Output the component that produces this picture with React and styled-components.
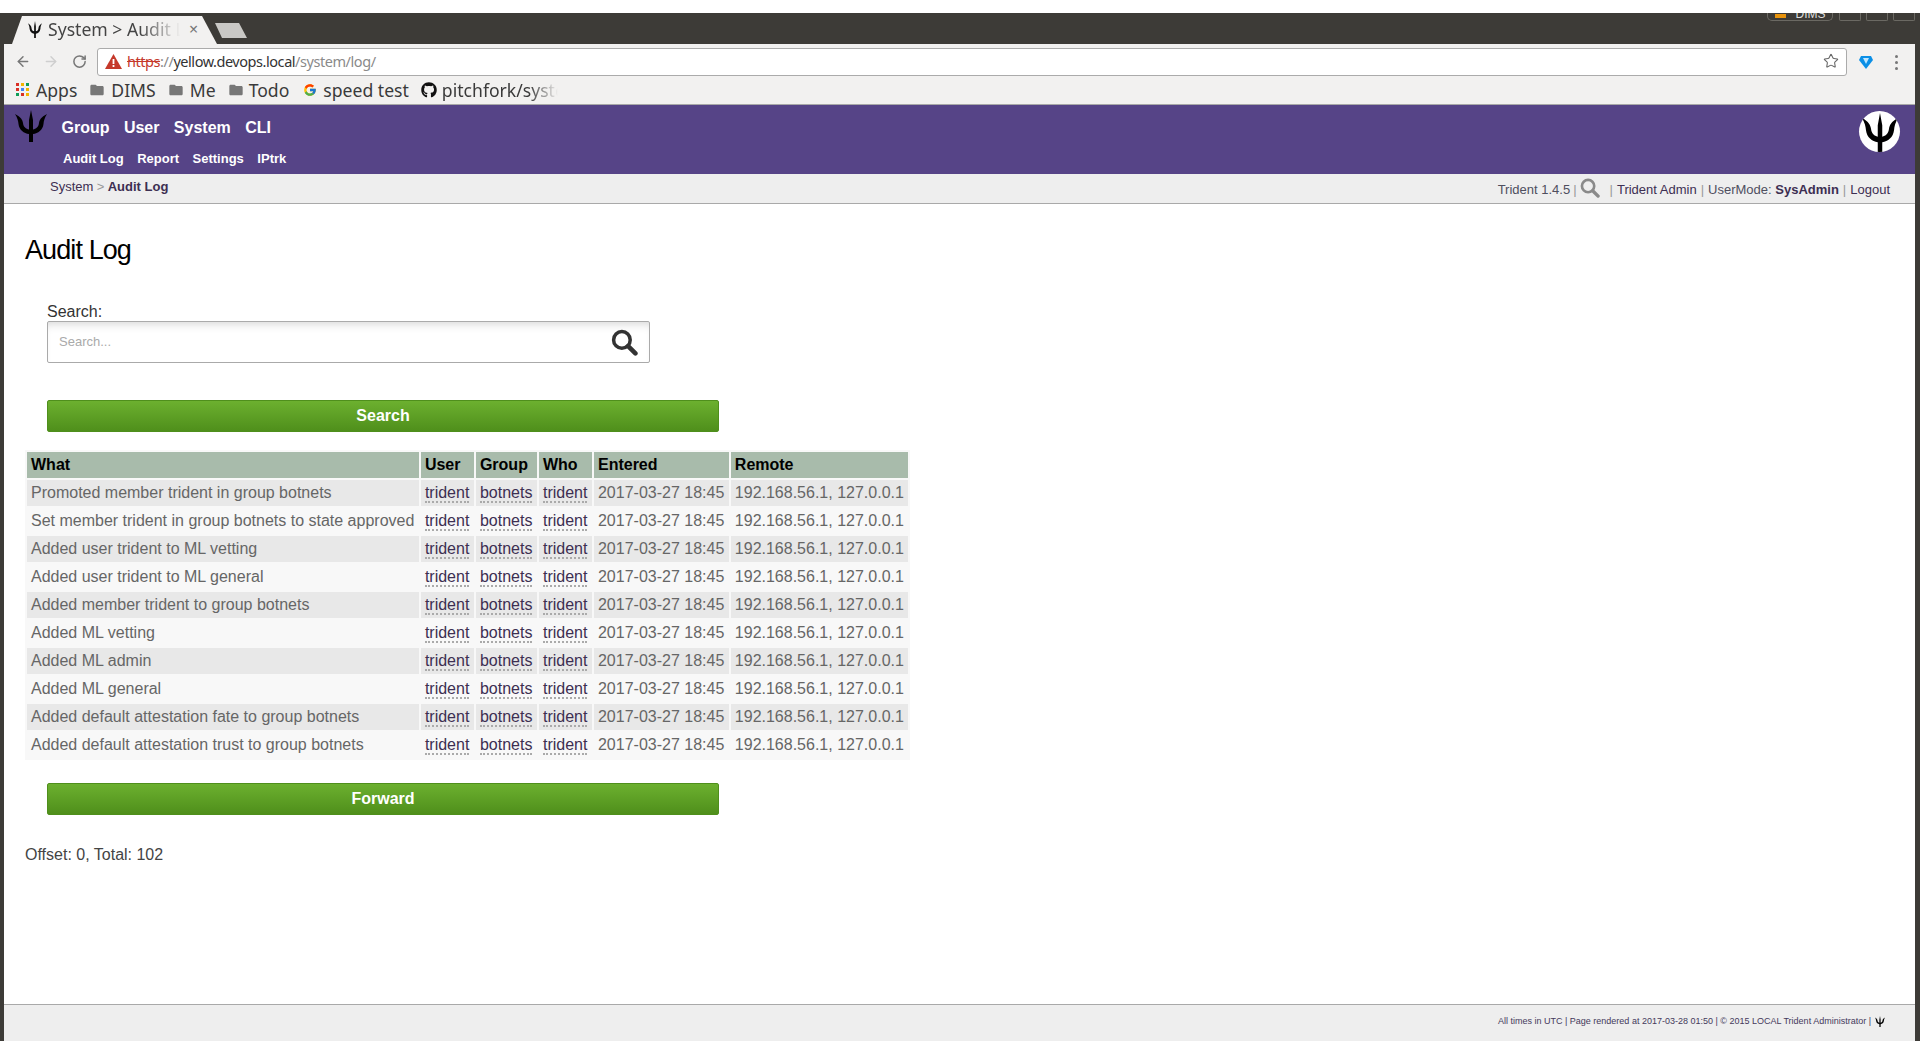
import React from 'react';
import styled, { createGlobalStyle } from 'styled-components';
import { ArrowLeft, ArrowRight, RotateCw, Star } from 'lucide-react';
import { MdFolder } from 'react-icons/md';
import { FcGoogle } from 'react-icons/fc';
import { FaGithub } from 'react-icons/fa';

const GlobalStyle = createGlobalStyle`
  html, body {
    margin: 0;
    padding: 0;
    background: #fff;
  }
  body {
    font-family: "Liberation Sans", Arial, sans-serif;
    font-size: 16px;
    color: #555;
  }
`;

const Screen = styled.div`
  width: 1920px;
  height: 1056px;
  padding: 13px 0 15px;
  box-sizing: border-box;
  overflow: hidden;
`;

const Frame = styled.div`
  height: 100%;
  display: flex;
  flex-direction: column;
  box-sizing: border-box;
  border-left: 4px solid #3d3b37;
  border-right: 5px solid #3d3b37;
`;

const TabStrip = styled.div`
  height: 31px;
  flex: none;
  background: #3d3b37;
  display: flex;
  align-items: flex-end;
  padding-left: 8px;
  margin-right: -5px;
`;

const Tab = styled.div`
  width: 205px;
  height: 28px;
  background: #f2f1f0;
  clip-path: polygon(0 100%, 10px 0, 190px 0, 205px 100%);
  display: flex;
  align-items: center;
  padding: 0 0 2px 16px;
  box-sizing: border-box;
  font-family: "Noto Sans", sans-serif;
`;

const TabTitle = styled.span`
  width: 135px;
  margin-left: 6px;
  font-size: 17.6px;
  color: #444;
  white-space: nowrap;
  overflow: hidden;
  -webkit-mask-image: linear-gradient(to right, #000 68%, transparent 98%);
  mask-image: linear-gradient(to right, #000 68%, transparent 98%);
`;

const TabClose = styled.span`
  margin-left: 6px;
  font-size: 16px;
  color: #777;
`;

const NewTab = styled.div`
  width: 32px;
  height: 15px;
  margin: 0 0 6px -2px;
  background: #c9c8c5;
  clip-path: polygon(0 0, 24px 0, 32px 100%, 7px 100%);
`;

const WinControls = styled.div`
  margin-left: auto;
  align-self: flex-start;
  display: flex;
  gap: 5px;
  padding-right: 5px;
`;

const WinBadge = styled.div`
  width: 66px;
  height: 8px;
  margin-right: 1px;
  box-sizing: border-box;
  border: 1px solid #6b6963;
  border-top: 0;
  border-radius: 0 0 5px 5px;
  overflow: hidden;
  display: flex;
  justify-content: center;
  gap: 10px;
  color: #ddd;
  font-size: 12px;
  line-height: 8px;
  span {
    margin-top: -3px;
  }
  i {
    width: 11px;
    height: 4px;
    margin-top: 1px;
    background: #e8930c;
  }
`;

const WinButton = styled.div`
  width: 22px;
  height: 8px;
  box-sizing: border-box;
  border: 1px solid #6b6963;
  border-top: 0;
  border-radius: 0 0 2px 2px;
`;

const Toolbar = styled.div`
  height: 33px;
  flex: none;
  background: #f2f1f0;
  display: flex;
  align-items: flex-start;
  padding: 4px 0 0 11px;
  box-sizing: border-box;
`;

const NavIcon = styled.span`
  width: 16px;
  height: 26px;
  margin-right: 12px;
  display: flex;
  align-items: center;
  justify-content: center;
  color: ${p => (p.$dim ? '#cfcfcf' : '#777')};
`;

const Omnibox = styled.div`
  width: 1750px;
  height: 28px;
  margin-left: -2px;
  box-sizing: border-box;
  background: #fff;
  border: 1px solid #ababab;
  border-radius: 3px;
  display: flex;
  align-items: center;
  padding: 0 7px 2px;
  font-family: "Noto Sans", sans-serif;
  font-size: 14.5px;
  letter-spacing: -0.45px;
`;

const Https = styled.span`
  color: #c5392b;
  margin-left: 5px;
  text-decoration: line-through;
`;

const UrlMuted = styled.span`
  color: #8a8a8a;
`;

const UrlHost = styled.span`
  color: #333;
`;

const StarSlot = styled.span`
  margin-left: auto;
  display: flex;
  color: #666;
`;

const ExtIcon = styled.span`
  margin-left: 12px;
  height: 28px;
  display: flex;
  align-items: center;
`;

const MenuDots = styled.span`
  margin-left: 22px;
  height: 28px;
  display: flex;
  flex-direction: column;
  align-items: center;
  justify-content: center;
  gap: 3px;
  i {
    width: 3px;
    height: 3px;
    border-radius: 50%;
    background: #777;
  }
`;

const Bookmarks = styled.div`
  height: 28px;
  flex: none;
  box-sizing: border-box;
  background: #f2f1f0;
  border-bottom: 1px solid #a8a8a8;
  display: flex;
  align-items: center;
  padding: 0 0 2px 12px;
  font-family: "Noto Sans", sans-serif;
  font-size: 17.6px;
  color: #3a3a3a;
`;

const AppsGrid = styled.span`
  width: 13px;
  height: 13px;
  display: grid;
  grid-template-columns: repeat(3, 3px);
  grid-auto-rows: 3px;
  gap: 2px;
  margin-right: 7px;
`;

const AppsDot = styled.i`
  background: ${p => p.$c};
`;

const Bookmark = styled.span`
  display: flex;
  align-items: center;
  gap: ${p => p.$gap || 6}px;
  margin-right: ${p => p.$right}px;
  white-space: nowrap;
`;

const FadedLabel = styled.span`
  width: 116px;
  overflow: hidden;
  -webkit-mask-image: linear-gradient(to right, #000 75%, transparent 100%);
  mask-image: linear-gradient(to right, #000 75%, transparent 100%);
`;

const Header = styled.header`
  height: 69px;
  flex: none;
  background: #564487;
  display: flex;
  position: relative;
  padding: 5px 0 0 11px;
  box-sizing: border-box;
`;

const LogoSlot = styled.span`
  width: 35px;
  height: 32px;
  flex: none;
  display: flex;
`;

const NavStack = styled.nav`
  margin-left: 11px;
  display: flex;
  flex-direction: column;
`;

const MainNav = styled.div`
  display: flex;
  gap: 14.4px;
  margin: 9px 0 0 0.5px;
  font-size: 16px;
  line-height: 18px;
  font-weight: bold;
  color: #fff;
`;

const SubNav = styled.div`
  display: flex;
  gap: 13.5px;
  margin: 14px 0 0 2px;
  font-size: 13px;
  line-height: 16px;
  font-weight: bold;
  color: #fff;
`;

const HeaderBadge = styled.span`
  margin: 1px 15px 0 auto;
  width: 41px;
  height: 41px;
  border-radius: 50%;
  background: #fff;
  display: flex;
  align-items: flex-end;
  justify-content: center;
  overflow: hidden;
`;

const Crumbs = styled.div`
  height: 30px;
  flex: none;
  box-sizing: border-box;
  background: #eee;
  border-bottom: 1px solid #a9a9a9;
  display: flex;
  justify-content: space-between;
  padding: 5px 25px 0 46px;
  font-size: 13px;
  line-height: 16px;
  color: #3d2f52;
`;

const CrumbSep = styled.span`
  color: #999;
  margin: 0 3.4px;
`;

const UserBar = styled.div`
  display: flex;
  align-items: flex-start;
  margin-top: 3px;
  color: #4f4f5f;
  a {
    color: #3d2f52;
  }
  b {
    color: #3d2f52;
  }
`;

const BarSep = styled.span`
  color: #999;
  margin: 0 ${p => p.$m || 4}px;
`;

const BarSearch = styled.span`
  display: flex;
  margin: -4px 6px 0 0;
`;

const Content = styled.main`
  flex: 1;
  background: #fff;
  padding: 31px 0 0 21px;
`;

const Title = styled.h1`
  margin: 0 0 38px;
  font-size: 27px;
  line-height: 30px;
  font-weight: normal;
  letter-spacing: -0.9px;
  color: #000;
`;

const SearchForm = styled.div`
  margin-left: 22px;
  width: 672px;
`;

const FieldLabel = styled.label`
  display: block;
  line-height: 18px;
  color: #333;
`;

const InputBox = styled.div`
  width: 603px;
  height: 42px;
  box-sizing: border-box;
  border: 1px solid #aaa;
  border-radius: 2px;
  box-shadow: inset 0 8px 10px -6px #d5d5d5;
  display: flex;
  align-items: center;
  padding: 0 11px;
  background: #fff;
  margin-bottom: 37px;
`;

const SearchInput = styled.input`
  flex: 1;
  border: 0;
  outline: 0;
  background: transparent;
  padding: 0 0 2px;
  font-family: "Liberation Sans", Arial, sans-serif;
  font-size: 13px;
  &::placeholder {
    color: #aaa;
    opacity: 1;
  }
`;

const GreenButton = styled.button`
  display: block;
  width: 672px;
  height: 32px;
  padding: 0;
  box-sizing: border-box;
  border: 1px solid #4f8f1c;
  border-radius: 2px;
  background: linear-gradient(to bottom, #6cb02f, #4f8f1b);
  color: #fff;
  font-family: "Liberation Sans", Arial, sans-serif;
  font-size: 16px;
  font-weight: bold;
`;

const LogTable = styled.table`
  margin-top: 18px;
  border-collapse: separate;
  border-spacing: 2px;
  background: #f8f8f8;
  font-size: 16px;
`;

const HeadCell = styled.th`
  height: 26px;
  padding: 0 4.55px 0 4px;
  text-align: left;
  background: #a8bbab;
  color: #000;
`;

const Row = styled.tr`
  background: ${p => (p.$alt ? '#f8f8f8' : '#e8e8e8')};
`;

const Cell = styled.td`
  height: 26px;
  padding: 0 4.55px 0 4px;
  white-space: nowrap;
  color: #666;
`;

const DottedLink = styled.a`
  color: #3d2f52;
  border-bottom: 2px dotted #aaa;
`;

const Pager = styled.div`
  margin: 23px 0 0 22px;
`;

const Totals = styled.div`
  margin-top: 31px;
  line-height: 18px;
  color: #444;
`;

const Footer = styled.footer`
  height: 37px;
  flex: none;
  box-sizing: border-box;
  background: #eee;
  border-top: 1px solid #a9a9a9;
  display: flex;
  justify-content: flex-end;
  align-items: center;
  gap: 4px;
  padding: 0 30px 4px 0;
  font-size: 9px;
  color: #453a5c;
`;

const Trident = ({ size = 32, height, color = '#000' }) => (
  <svg width={size} height={height || size} viewBox="0 0 32 32" preserveAspectRatio="none">
    <path
      fill={color}
      d="M16 0 L18 10 L18 19.5 C21 19 23.5 17 24 13 C24.4 10 26 7 32 4 C29.5 8 28.7 11 28.5 14 C27.8 20 23 23.5 18 24 L18 32 L14 32 L14 24 C9 23.5 4.2 20 3.5 14 C3.3 11 2.5 8 0 4 C6 7 7.6 10 8 13 C8.5 17 11 19 14 19.5 L14 10 Z"
    />
  </svg>
);

const Magnifier = ({ size, color }) => (
  <svg width={size} height={size} viewBox="0 0 26 26">
    <circle cx="10.5" cy="10.5" r="8" fill="none" stroke={color} strokeWidth="3.4" />
    <path d="M16.5 16.5 L23.5 23.5" stroke={color} strokeWidth="4.4" strokeLinecap="round" />
  </svg>
);

const WarnTriangle = () => (
  <svg width="17" height="15" viewBox="0 0 17 15">
    <path d="M8.5 0 L17 15 L0 15 Z" fill="#c5392b" />
    <rect x="7.6" y="5" width="1.8" height="5" fill="#fff" />
    <rect x="7.6" y="11" width="1.8" height="2" fill="#fff" />
  </svg>
);

const ExtDiamond = () => (
  <svg width="14" height="14" viewBox="0 0 14 14">
    <path d="M2 1 L12 1 L14 5 L7 14 L0 5 Z" fill="#0b8fe6" />
    <path d="M4 3 L10 3 L7 9 Z" fill="#bfe6ff" />
  </svg>
);

const appsColors = ['#d93025', '#f4b400', '#0f9d58', '#d93025', '#4285f4', '#f4b400', '#0f9d58', '#d93025', '#f4b400'];

const logRows = [
  'Promoted member trident in group botnets',
  'Set member trident in group botnets to state approved',
  'Added user trident to ML vetting',
  'Added user trident to ML general',
  'Added member trident to group botnets',
  'Added ML vetting',
  'Added ML admin',
  'Added ML general',
  'Added default attestation fate to group botnets',
  'Added default attestation trust to group botnets',
];

const App = () => {
  return (
    <Screen>
      <GlobalStyle />
      <Frame>
        <TabStrip>
          <Tab>
            <Trident size={14} height={17} color="#111" />
            <TabTitle>System &gt; Audit Log</TabTitle>
            <TabClose>×</TabClose>
          </Tab>
          <NewTab />
          <WinControls>
            <WinBadge><i /><span>DIMS</span></WinBadge>
            <WinButton />
            <WinButton />
            <WinButton />
          </WinControls>
        </TabStrip>

        <Toolbar>
          <NavIcon><ArrowLeft size={17} strokeWidth={2.2} /></NavIcon>
          <NavIcon $dim><ArrowRight size={17} strokeWidth={2.2} /></NavIcon>
          <NavIcon><RotateCw size={15} strokeWidth={2.4} /></NavIcon>
          <Omnibox>
            <WarnTriangle />
            <Https>https</Https>
            <UrlMuted>://</UrlMuted>
            <UrlHost>yellow.devops.local</UrlHost>
            <UrlMuted>/system/log/</UrlMuted>
            <StarSlot><Star size={16} strokeWidth={1.6} /></StarSlot>
          </Omnibox>
          <ExtIcon><ExtDiamond /></ExtIcon>
          <MenuDots><i /><i /><i /></MenuDots>
        </Toolbar>

        <Bookmarks>
          <AppsGrid>
            {appsColors.map((c, i) => <AppsDot key={i} $c={c} />)}
          </AppsGrid>
          <Bookmark $right={12}>Apps</Bookmark>
          <Bookmark $right={12} $gap={6}><MdFolder size={16} color="#777" />DIMS</Bookmark>
          <Bookmark $right={12} $gap={6}><MdFolder size={16} color="#777" />Me</Bookmark>
          <Bookmark $right={14} $gap={5}><MdFolder size={16} color="#777" />Todo</Bookmark>
          <Bookmark $right={12}><FcGoogle size={14} />speed test</Bookmark>
          <Bookmark $right={0} $gap={5}><FaGithub size={16} color="#111" /><FadedLabel>pitchfork/system</FadedLabel></Bookmark>
        </Bookmarks>

        <Header>
          <LogoSlot><Trident size={32} height={32} /></LogoSlot>
          <NavStack>
            <MainNav>
              <span>Group</span>
              <span>User</span>
              <span>System</span>
              <span>CLI</span>
            </MainNav>
            <SubNav>
              <span>Audit Log</span>
              <span>Report</span>
              <span>Settings</span>
              <span>IPtrk</span>
            </SubNav>
          </NavStack>
          <HeaderBadge><Trident size={36} height={39} /></HeaderBadge>
        </Header>

        <Crumbs>
          <div>System<CrumbSep>&gt;</CrumbSep><b>Audit Log</b></div>
          <UserBar>
            <span>Trident 1.4.5</span>
            <BarSep $m={3}>|</BarSep>
            <BarSearch><Magnifier size={20} color="#8a8a8a" /></BarSearch>
            <BarSep>|</BarSep>
            <a>Trident Admin</a>
            <BarSep>|</BarSep>
            <span>UserMode:&nbsp;</span><b>SysAdmin</b>
            <BarSep>|</BarSep>
            <a>Logout</a>
          </UserBar>
        </Crumbs>

        <Content>
          <Title>Audit Log</Title>
          <SearchForm>
            <FieldLabel>Search:</FieldLabel>
            <InputBox>
              <SearchInput placeholder="Search..." />
              <Magnifier size={27} color="#333" />
            </InputBox>
            <GreenButton>Search</GreenButton>
          </SearchForm>

          <LogTable>
            <thead>
              <tr>
                <HeadCell>What</HeadCell>
                <HeadCell>User</HeadCell>
                <HeadCell>Group</HeadCell>
                <HeadCell>Who</HeadCell>
                <HeadCell>Entered</HeadCell>
                <HeadCell>Remote</HeadCell>
              </tr>
            </thead>
            <tbody>
              {logRows.map((what, i) => (
                <Row key={what} $alt={i % 2 === 1}>
                  <Cell>{what}</Cell>
                  <Cell><DottedLink>trident</DottedLink></Cell>
                  <Cell><DottedLink>botnets</DottedLink></Cell>
                  <Cell><DottedLink>trident</DottedLink></Cell>
                  <Cell>2017-03-27 18:45</Cell>
                  <Cell>192.168.56.1, 127.0.0.1</Cell>
                </Row>
              ))}
            </tbody>
          </LogTable>

          <Pager>
            <GreenButton>Forward</GreenButton>
          </Pager>
          <Totals>Offset: 0, Total: 102</Totals>
        </Content>

        <Footer>
          <span>All times in UTC | Page rendered at 2017-03-28 01:50 | © 2015 LOCAL Trident Administrator |</span>
          <Trident size={10} height={11} />
        </Footer>
      </Frame>
    </Screen>
  );
};

export default App;
